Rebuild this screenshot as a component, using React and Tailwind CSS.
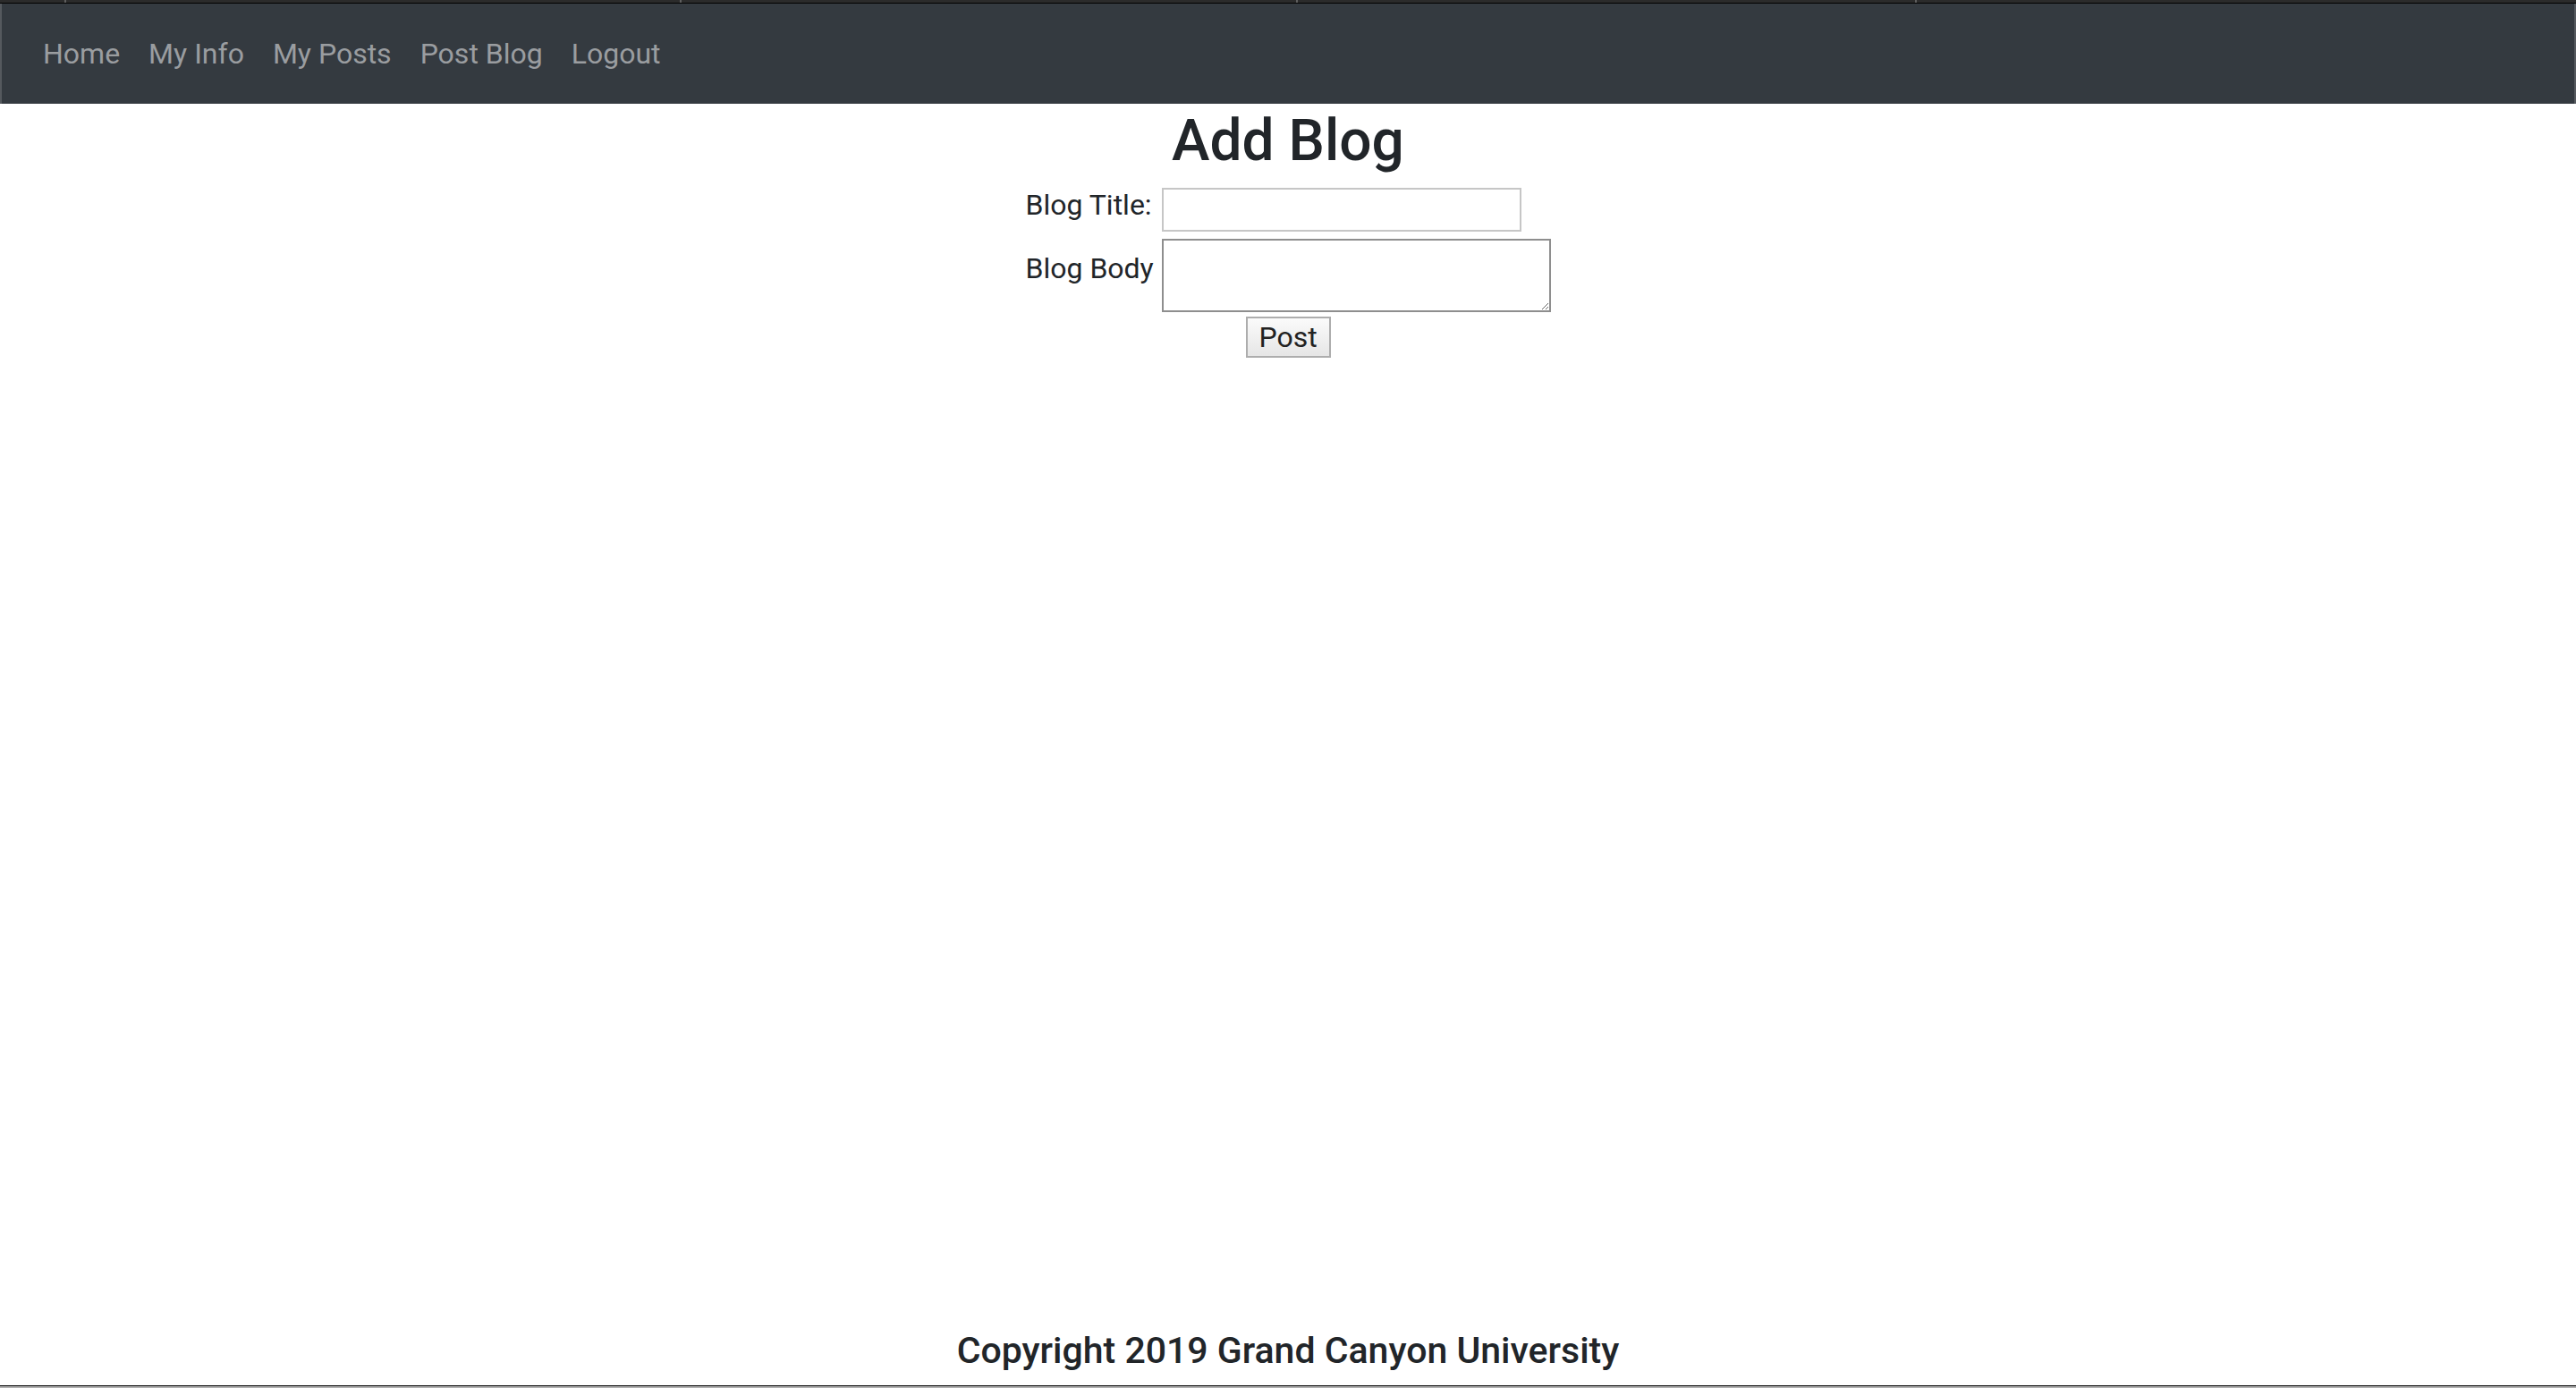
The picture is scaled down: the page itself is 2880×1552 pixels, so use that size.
export default function App() {
  const links = ["Home", "My Info", "My Posts", "Post Blog", "Logout"];
  return (
    <div
      className="min-h-screen flex flex-col bg-white text-[#212529]"
      style={{ fontFamily: "Roboto, 'Liberation Sans', sans-serif" }}
    >
      <div className="h-[4px] bg-[#2b2b2b] border-b border-black flex">
        <div className="ml-[72px] w-[2px] h-[3px] bg-[#5e5e5e]" />
        <div className="ml-[686px] w-[2px] h-[3px] bg-[#5e5e5e]" />
        <div className="ml-[687px] w-[2px] h-[3px] bg-[#5e5e5e]" />
        <div className="ml-[690px] w-[2px] h-[3px] bg-[#5e5e5e]" />
      </div>
      <nav className="h-[112px] bg-[#343a40] flex items-center px-[30px] border-x-2 border-[#55595e]">
        {links.map((l) => (
          <a key={l} className="px-4 text-[32px] leading-[48px] text-[#9a9da0]">
            {l}
          </a>
        ))}
      </nav>
      <main className="flex-1 flex flex-col items-center">
        <h1 className="mt-[3px] text-[64px] leading-[77px] font-medium">Add Blog</h1>
        <div className="mt-[14px] grid grid-cols-[148px_auto] gap-x-[4px] gap-y-[8px] text-[32px]">
          <label className="leading-[38px] self-start whitespace-nowrap">Blog Title:</label>
          <div className="flex">
            <input
              type="text"
              className="w-[402px] h-[49px] border-2 border-[#c6c6c6] bg-white outline-none"
            />
          </div>
          <label className="leading-[38px] self-center mb-4 whitespace-nowrap">Blog Body</label>
          <textarea className="w-[435px] h-[82px] border-2 border-[#8e8e8e] bg-white outline-none block" />
        </div>
        <button className="mt-[5px] w-[95px] h-[46px] border-2 border-[#adadad] bg-gradient-to-b from-[#fbfbfb] to-[#e6e6e6] text-[32px] leading-none text-[#222]">
          Post
        </button>
      </main>
      <footer className="flex flex-col">
        <div className="text-center text-[41px] leading-[48px] font-medium pb-[15px]">
          Copyright 2019 Grand Canyon University
        </div>
        <div className="h-[1px] bg-black" />
        <div className="h-[2px] bg-[#b0b0b0]" />
      </footer>
    </div>
  );
}
